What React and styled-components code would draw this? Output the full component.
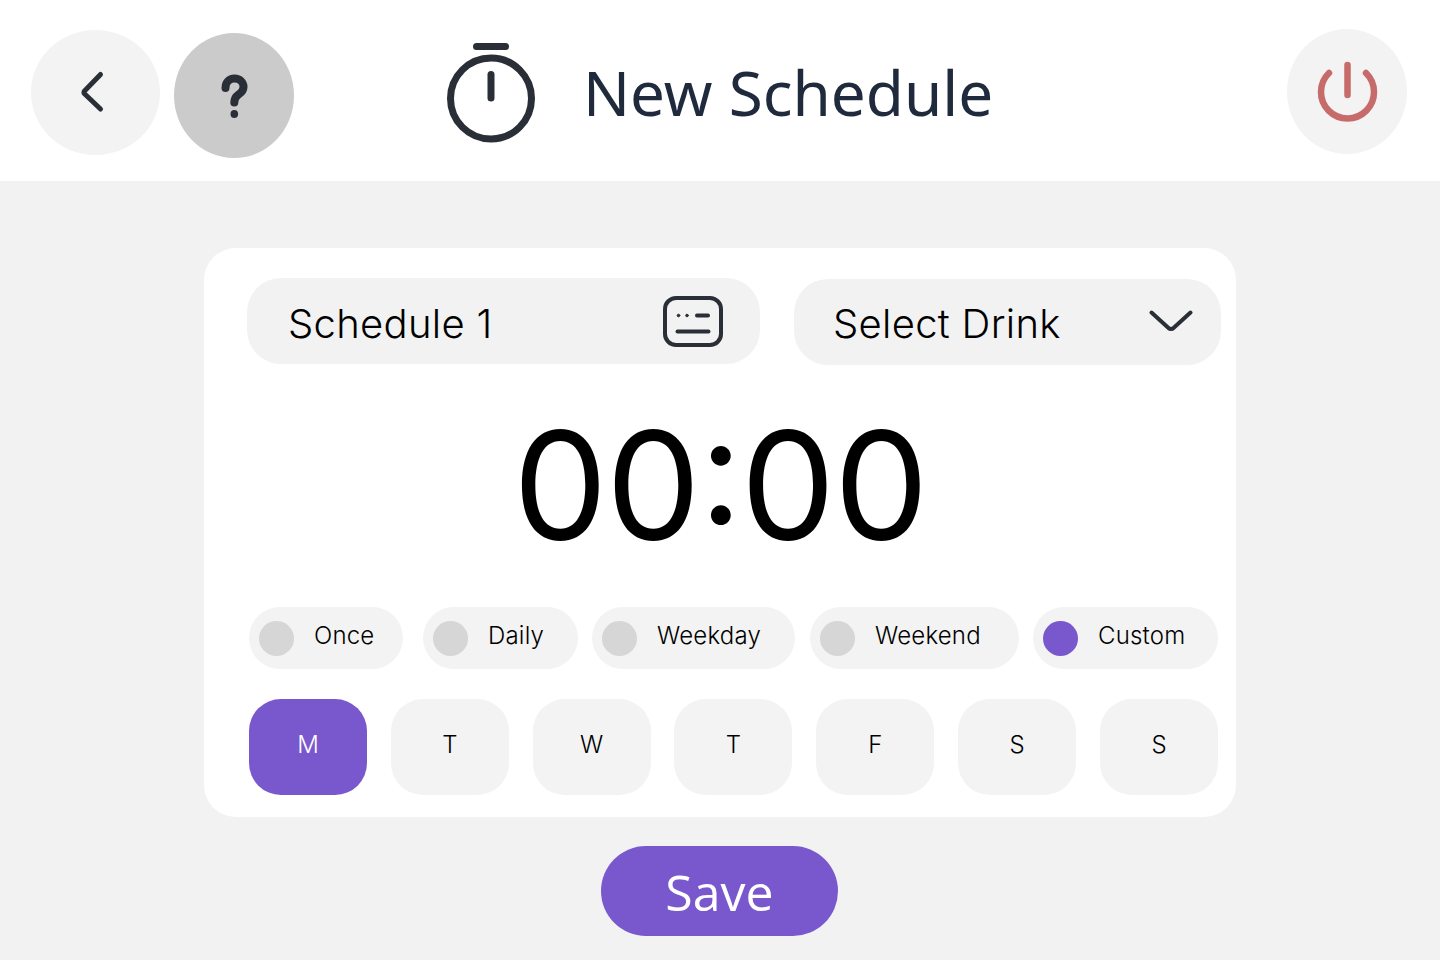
import styled, { createGlobalStyle } from "styled-components";

const Global = createGlobalStyle`
  html, body {
    margin: 0;
    background: #f2f2f2;
  }
  * {
    box-sizing: border-box;
  }
`;

const Page = styled.div`
  width: 1440px;
  height: 960px;
  overflow: hidden;
  font-family: Inter, "Liberation Sans", sans-serif;
  color: #000;
`;

const Header = styled.header`
  height: 181px;
  background: #fff;
  display: flex;
  align-items: flex-start;
  padding-left: 31px;
`;

const RoundButton = styled.div`
  width: ${(p) => p.$w}px;
  height: 125px;
  margin-top: ${(p) => p.$top}px;
  margin-left: ${(p) => p.$left || 0}px;
  margin-right: ${(p) => p.$right || 0}px;
  border-radius: 50%;
  background: ${(p) => p.$bg || "#f3f3f3"};
  flex: none;

  svg {
    display: block;
    width: 100%;
    height: 100%;
  }
`;

const TitleGroup = styled.div`
  display: flex;
  align-items: flex-start;
  gap: 47px;
  margin-left: 153px;
  margin-top: 43px;
  flex: 1;

  svg {
    display: block;
    flex: none;
  }
`;

const Title = styled.h1`
  margin: 0;
  font-family: "Noto Sans", sans-serif;
  font-weight: 400;
  font-size: 62px;
  line-height: 98px;
  color: #1f2a3c;
`;

const Main = styled.main`
  padding-top: 67px;
  display: flex;
  flex-direction: column;
  align-items: center;
`;

const Card = styled.section`
  width: 1032px;
  height: 569px;
  background: #fff;
  border-radius: 32px;
  padding: 30px 15px 22px 43px;
`;

const TopRow = styled.div`
  display: flex;
  align-items: flex-start;
  gap: 34px;
`;

const Field = styled.div`
  width: ${(p) => p.$w}px;
  height: 86px;
  margin-top: ${(p) => p.$top || 0}px;
  border-radius: 34px;
  background: #f2f2f2;
  display: flex;
  align-items: center;
  justify-content: space-between;
  padding: 0 ${(p) => p.$right}px 0 ${(p) => p.$left}px;
  font-size: 40px;
  line-height: 48px;
  font-weight: 350;
  letter-spacing: 0.3px;

  span {
    position: relative;
    top: ${(p) => p.$shift}px;
  }

  svg {
    display: block;
    flex: none;
  }
`;

const Timer = styled.div`
  height: 242px;
  margin-left: -43px;
  margin-right: -15px;
  display: flex;
  align-items: center;
  justify-content: center;
  font-size: 150px;
  letter-spacing: -1.5px;
  font-feature-settings: "calt" 1;
  line-height: 1;
`;

const RadioRow = styled.div`
  display: flex;
  margin-left: 2px;
`;

const RadioPill = styled.div`
  width: ${(p) => p.$w}px;
  height: 62px;
  margin-right: ${(p) => p.$gap}px;
  border-radius: 31px;
  background: #f3f3f3;
  display: flex;
  align-items: center;
  gap: 20.5px;
  padding-left: 9.5px;
  font-size: 24px;
  font-weight: 350;
  letter-spacing: 0.2px;
  flex: none;
`;

const RadioDot = styled.span`
  width: 35px;
  height: 35px;
  border-radius: 50%;
  background: ${(p) => (p.$on ? "#7958ce" : "#d6d6d6")};
  flex: none;
`;

const RadioLabel = styled.span`
  position: relative;
  top: -3px;
`;

const DayRow = styled.div`
  display: flex;
  justify-content: space-between;
  width: 969px;
  margin-left: 2px;
  margin-top: 30px;
`;

const DayButton = styled.div`
  width: 118px;
  height: 96px;
  border-radius: 32px;
  background: ${(p) => (p.$on ? "#7958ce" : "#f3f3f3")};
  color: ${(p) => (p.$on ? "#fff" : "#000")};
  display: flex;
  align-items: center;
  justify-content: center;
  font-size: 24px;
  font-weight: 350;
  padding-bottom: 6px;
`;

const SaveButton = styled.button`
  width: 237px;
  height: 90px;
  margin-top: 29px;
  margin-right: 1px;
  border: 0;
  border-radius: 45px;
  background: #7958ce;
  color: #fff;
  font-family: "Open Sans", sans-serif;
  font-size: 50px;
  font-weight: 400;
  padding: 2px 0 0;
`;

const radios = [
  { label: "Once", w: 154, gap: 20 },
  { label: "Daily", w: 155, gap: 14 },
  { label: "Weekday", w: 203, gap: 15 },
  { label: "Weekend", w: 209, gap: 14 },
  { label: "Custom", w: 185, gap: 0, on: true },
];

const days = ["M", "T", "W", "T", "F", "S", "S"];

export default function App() {
  return (
    <Page>
      <Global />
      <Header>
        <RoundButton $w={129} $top={30}>
          <svg viewBox="0 0 129 125" fill="none">
            <path
              d="M69.5 44.5 53.5 61a2 2 0 0 0 0 2.8L69.5 79"
              stroke="#2a2e36"
              strokeWidth="5"
              strokeLinecap="round"
              strokeLinejoin="round"
            />
          </svg>
        </RoundButton>
        <RoundButton $w={120} $top={33} $left={14} $bg="#cbcbcb">
          <svg viewBox="0 0 120 125" fill="none">
            <path
              d="M51.5 55C51.500 49.500 55 45.500 60.500 45.500C66 45.500 69.500 49.500 69.500 54C69.500 58.500 66.500 60 64 62C61.500 63.800 60.300 66 60.300 69.500"
              stroke="#2a2e36"
              strokeWidth="8"
              strokeLinecap="round"
            />
            <ellipse cx="60.300" cy="81" rx="3.800" ry="4" fill="#2a2e36" />
          </svg>
        </RoundButton>
        <TitleGroup>
          <svg width="89" height="100" viewBox="0 0 89 100" fill="none" stroke="#2a2e36" strokeLinecap="round">
            <path d="M29.500 3.500H58.500" strokeWidth="7" />
            <circle cx="44" cy="55.500" r="40.500" strokeWidth="7" />
            <path d="M44 31.500V55" strokeWidth="7" />
          </svg>
          <Title>New Schedule</Title>
        </TitleGroup>
        <RoundButton $w={120} $top={29} $right={33}>
          <svg viewBox="0 0 120 125" fill="none">
            <path
              d="M42 44a26.500 26.500 0 1 0 37 0M60.500 36V66"
              stroke="#c76a6a"
              strokeWidth="6.500"
              strokeLinecap="round"
            />
          </svg>
        </RoundButton>
      </Header>
      <Main>
        <Card>
          <TopRow>
            <Field $w={513} $left={41} $right={37} $shift={3}>
              <span>Schedule 1</span>
              <svg width="60" height="51" viewBox="0 0 60 51" fill="none" stroke="#2a2e36" strokeLinecap="round">
                <rect x="2" y="2" width="56" height="47" rx="11" strokeWidth="4" />
                <path d="M34 19.500H45M14.500 35.500H45.500" strokeWidth="4" />
                <circle cx="15.500" cy="19.500" r="1.300" fill="#2a2e36" strokeWidth="1" />
                <circle cx="24" cy="19.500" r="1.300" fill="#2a2e36" strokeWidth="1" />
              </svg>
            </Field>
            <Field $w={427} $top={1} $left={39} $right={27} $shift={2}>
              <span>Select Drink</span>
              <svg width="46" height="24" viewBox="0 0 46 24" fill="none">
                <path
                  d="M3.500 2.500 20.500 18a3.500 3.500 0 0 0 5 0L42.500 2.500"
                  stroke="#2a2e36"
                  strokeWidth="4"
                  strokeLinecap="round"
                  strokeLinejoin="round"
                />
              </svg>
            </Field>
          </TopRow>
          <Timer>00:00</Timer>
          <RadioRow>
            {radios.map((r) => (
              <RadioPill key={r.label} $w={r.w} $gap={r.gap}>
                <RadioDot $on={r.on} />
                <RadioLabel>{r.label}</RadioLabel>
              </RadioPill>
            ))}
          </RadioRow>
          <DayRow>
            {days.map((d, i) => (
              <DayButton key={i} $on={i === 0}>
                {d}
              </DayButton>
            ))}
          </DayRow>
        </Card>
        <SaveButton>Save</SaveButton>
      </Main>
    </Page>
  );
}
